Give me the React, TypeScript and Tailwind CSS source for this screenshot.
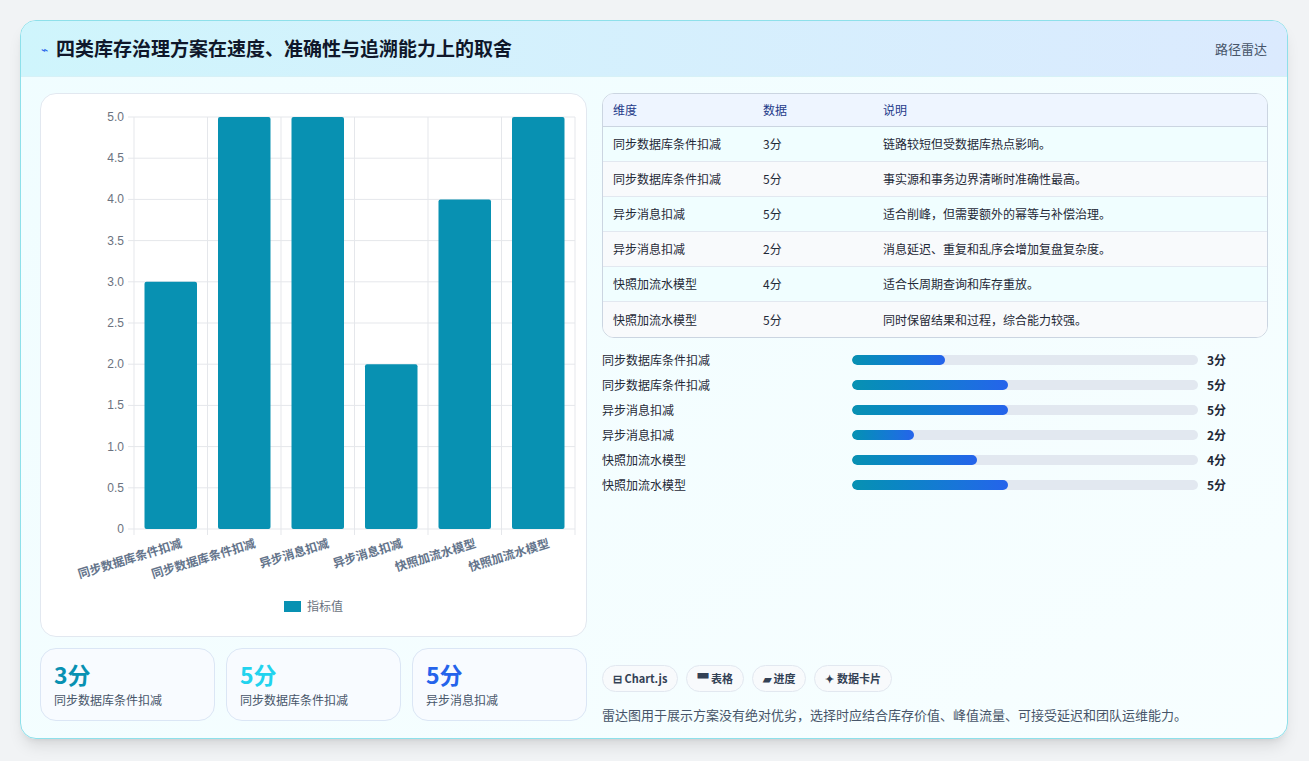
import React from "react";

const font = { fontFamily: '"Noto Sans CJK SC", "Noto Sans", sans-serif' };
const cats = ["同步数据库条件扣减", "同步数据库条件扣减", "异步消息扣减", "异步消息扣减", "快照加流水模型", "快照加流水模型"];
const vals = [3, 5, 5, 2, 4, 5];
const rows = [
  ["同步数据库条件扣减", "3分", "链路较短但受数据库热点影响。"],
  ["同步数据库条件扣减", "5分", "事实源和事务边界清晰时准确性最高。"],
  ["异步消息扣减", "5分", "适合削峰，但需要额外的幂等与补偿治理。"],
  ["异步消息扣减", "2分", "消息延迟、重复和乱序会增加复盘复杂度。"],
  ["快照加流水模型", "4分", "适合长周期查询和库存重放。"],
  ["快照加流水模型", "5分", "同时保留结果和过程，综合能力较强。"],
];

function Chart() {
  const x0 = 93, x1 = 534, y0 = 23, y1 = 435;
  const unit = (y1 - y0) / 5;
  const cw = (x1 - x0) / 6;
  const ticks = ["0", "0.5", "1.0", "1.5", "2.0", "2.5", "3.0", "3.5", "4.0", "4.5", "5.0"];
  return (
    <svg width="546" height="543" className="block">
      {ticks.map((t, i) => {
        const y = y1 - (i * unit) / 2;
        return (
          <g key={i}>
            <line x1={x0 - 6} x2={x1} y1={y} y2={y} stroke="#e5e7eb" />
            <text x={x0 - 10} y={y + 4} textAnchor="end" fontSize="12" fill="#6b7280" fontFamily="Liberation Sans, sans-serif">{t}</text>
          </g>
        );
      })}
      {Array.from({ length: 7 }).map((_, i) => (
        <line key={i} x1={x0 + i * cw} x2={x0 + i * cw} y1={y0} y2={y1 + 6} stroke="#e5e7eb" />
      ))}
      {vals.map((v, i) => (
        <rect key={i} x={x0 + i * cw + 10.5} y={y1 - v * unit} width={cw - 21} height={v * unit} rx="2" fill="#0891b2" />
      ))}
      {cats.map((c, i) => {
        const cx = x0 + i * cw + cw / 2 + 12;
        return (
          <text key={i} x={cx} y={y1 + 18} textAnchor="end" fontSize="12" fontWeight="600" fill="#64748b" transform={`rotate(-17 ${cx} ${y1 + 18})`} style={font}>{c}</text>
        );
      })}
      <rect x="243" y="507" width="17" height="11" fill="#0891b2" />
      <text x="266" y="517" fontSize="12" fill="#6b7280" style={font}>指标值</text>
    </svg>
  );
}

export default function App() {
  return (
    <div className="w-[1309px] h-[761px] bg-[#f1f3f5] pt-5 pl-5" style={font}>
      <div className="w-[1268px] h-[719px] rounded-2xl border border-[#8ee0ea] bg-gradient-to-br from-[#f0fdff] to-[#f7feff] overflow-hidden shadow-lg flex flex-col">
        <div className="h-[56px] flex items-center justify-between px-5 bg-gradient-to-r from-[#cff5fc] to-[#dbeafe] border-b border-[#d6f1f7]">
          <div className="flex items-center gap-2">
            <span className="text-[#2563eb] text-xs">⌁</span>
            <span className="text-[19px] font-bold text-[#0f172a]">四类库存治理方案在速度、准确性与追溯能力上的取舍</span>
          </div>
          <span className="text-[13px] text-[#475569]">路径雷达</span>
        </div>
        <div className="flex gap-[15px] px-[19px] pt-[16px]">
          <div className="w-[547px] flex flex-col gap-[11px]">
            <div className="h-[544px] rounded-2xl border border-[#e2e8f0] bg-white overflow-hidden">
              <Chart />
            </div>
            <div className="grid grid-cols-3 gap-[11px]">
              {[["3分", "text-[#0891b2]", "同步数据库条件扣减"], ["5分", "text-[#22d3ee]", "同步数据库条件扣减"], ["5分", "text-[#2563eb]", "异步消息扣减"]].map(([v, c, l], i) => (
                <div key={i} className="h-[73px] rounded-2xl border border-[#dbe6f5] bg-[#f8fbff] px-[13px] pt-[10px]">
                  <div className={`text-[23px] font-bold leading-[30px] ${c}`}>{v}</div>
                  <div className="text-[12px] text-[#475569] mt-[2px]">{l}</div>
                </div>
              ))}
            </div>
          </div>
          <div className="w-[668px] flex flex-col">
            <div className="rounded-xl border border-[#cbd5e1] overflow-hidden bg-white">
              <div className="h-[33px] flex items-center bg-[#eef5ff] border-b border-[#cbd5e1] text-[12px] text-[#1e3a8a]">
                <span className="w-[160px] pl-[10px]">维度</span>
                <span className="w-[120px]">数据</span>
                <span>说明</span>
              </div>
              {rows.map((r, i) => (
                <div key={i} className={`h-[35px] flex items-center text-[12px] text-[#1f2937] ${i < 5 ? "border-b border-[#e2e8f0]" : ""} ${i % 2 ? "bg-[#f8fafc]" : "bg-[#f0feff]"}`}>
                  <span className="w-[160px] pl-[10px]">{r[0]}</span>
                  <span className="w-[120px]">{r[1]}</span>
                  <span>{r[2]}</span>
                </div>
              ))}
            </div>
            <div className="mt-[9px] flex flex-col">
              {rows.map((r, i) => (
                <div key={i} className="h-[25px] flex items-center text-[12px]">
                  <span className="w-[250px] text-[#1f2937]">{r[0]}</span>
                  <div className="w-[346px] h-[10px] rounded-full bg-[#e2e8f0] overflow-hidden">
                    <div className="h-full rounded-full bg-gradient-to-r from-[#0891b2] to-[#2563eb]" style={{ width: `${vals[i] * 9}%` }} />
                  </div>
                  <span className="ml-[9px] font-bold text-[#1f2937]">{r[1]}</span>
                </div>
              ))}
            </div>
            <div className="flex-1" />
            <div className="mt-[168px] flex gap-[8px]">
              {["⊟ Chart.js", "▀ 表格", "▰ 进度", "✦ 数据卡片"].map((t, i) => (
                <span key={i} className="h-[27px] px-[10px] rounded-full border border-[#e2e8f0] bg-[#f8fafc] text-[11px] font-bold text-[#334155] flex items-center">{t}</span>
              ))}
            </div>
            <div className="mt-[13px] text-[13px] text-[#475569]">雷达图用于展示方案没有绝对优劣，选择时应结合库存价值、峰值流量、可接受延迟和团队运维能力。</div>
          </div>
        </div>
      </div>
    </div>
  );
}
